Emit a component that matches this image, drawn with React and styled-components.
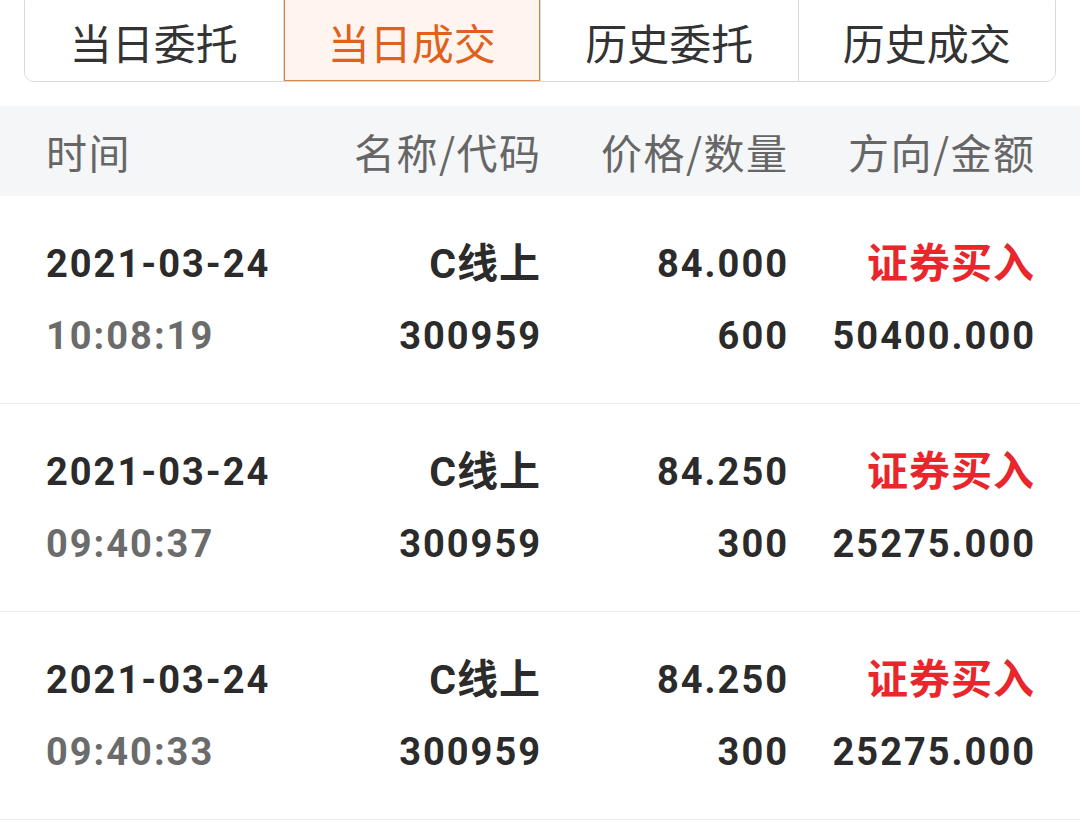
import React, { useState } from "react";
import styled, { createGlobalStyle } from "styled-components";

const GlobalStyle = createGlobalStyle`
	html, body {
		margin: 0;
		padding: 0;
		background: #ffffff;
	}

	body {
		font-family: Roboto, "Noto Sans CJK SC", sans-serif;
		overflow: hidden;
	}
`;

const Page = styled.div`
	width: 1080px;
	height: 823px;
	background: #ffffff;
	overflow: hidden;
`;

const Tabs = styled.div`
	display: grid;
	grid-template-columns: repeat(4, 1fr);
	margin: -8px 24px 0;
	height: 90px;
	border: 1px solid #d9d9d9;
	border-radius: 10px;
	overflow: hidden;
	box-sizing: border-box;
`;

const Tab = styled.div`
	display: flex;
	align-items: center;
	justify-content: center;
	padding-top: 8px;
	font-size: 42px;
	font-family: "Noto Sans CJK SC", sans-serif;
	color: ${props => (props.active ? "#e0611d" : "#333333")};
	background: ${props => (props.active ? "#fff5ee" : "#ffffff")};
	border-left: 1px solid #d9d9d9;
	box-shadow: ${props => (props.active ? "inset 0 0 0 1px #d9854e" : "none")};
	cursor: pointer;

	&:first-child {
		border-left: none;
	}
`;

const HeadRow = styled.div`
	display: grid;
	grid-template-columns: repeat(4, 1fr);
	align-items: center;
	margin-top: 24px;
	height: 90px;
	padding: 0 46px;
	background: #f5f6f8;
	font-family: "Noto Sans CJK SC", sans-serif;
	font-size: 41px;
	color: #666666;

	span {
		text-align: right;
		letter-spacing: 1.5px;
		margin-right: -1.5px;
	}

	span:first-child {
		text-align: left;
	}
`;

const Row = styled.div`
	display: grid;
	grid-template-columns: repeat(4, 1fr);
	padding: 32px 46px 31px;
	border-bottom: 1px solid #ebebeb;
`;

const Cell = styled.div`
	display: flex;
	flex-direction: column;
	align-items: ${props => (props.left ? "flex-start" : "flex-end")};
`;

const Line = styled.span`
	height: 72px;
	line-height: 72px;
	font-size: ${props => (props.cjk ? "41px" : "38px")};
	font-weight: 700;
	letter-spacing: ${props => (props.cjk ? "1px" : "2px")};
	margin-right: ${props => (props.cjk ? "-1px" : "-2px")};
	white-space: nowrap;
	color: ${props => props.color || "#2b2b2b"};
`;

const trades = [
	{ date: "2021-03-24", time: "10:08:19", name: "C线上", code: "300959", price: "84.000", qty: "600", side: "证券买入", amount: "50400.000" },
	{ date: "2021-03-24", time: "09:40:37", name: "C线上", code: "300959", price: "84.250", qty: "300", side: "证券买入", amount: "25275.000" },
	{ date: "2021-03-24", time: "09:40:33", name: "C线上", code: "300959", price: "84.250", qty: "300", side: "证券买入", amount: "25275.000" },
];

const tabs = ["当日委托", "当日成交", "历史委托", "历史成交"];

const TradeRow = ({ trade }) => (
	<Row>
		<Cell left>
			<Line>{trade.date}</Line>
			<Line color="#6b6b6b">{trade.time}</Line>
		</Cell>
		<Cell>
			<Line cjk>{trade.name}</Line>
			<Line>{trade.code}</Line>
		</Cell>
		<Cell>
			<Line>{trade.price}</Line>
			<Line>{trade.qty}</Line>
		</Cell>
		<Cell>
			<Line cjk color="#e8262b">{trade.side}</Line>
			<Line>{trade.amount}</Line>
		</Cell>
	</Row>
);

const App = () => {
	const [active, setActive] = useState(1);

	return (
		<Page>
			<GlobalStyle />
			<Tabs>
				{tabs.map((t, i) => (
					<Tab key={t} active={i === active} onClick={() => setActive(i)}>
						{t}
					</Tab>
				))}
			</Tabs>
			<HeadRow>
				<span>时间</span>
				<span>名称/代码</span>
				<span>价格/数量</span>
				<span>方向/金额</span>
			</HeadRow>
			{trades.map((trade, i) => (
				<TradeRow key={i} trade={trade} />
			))}
		</Page>
	);
};

export default App;
